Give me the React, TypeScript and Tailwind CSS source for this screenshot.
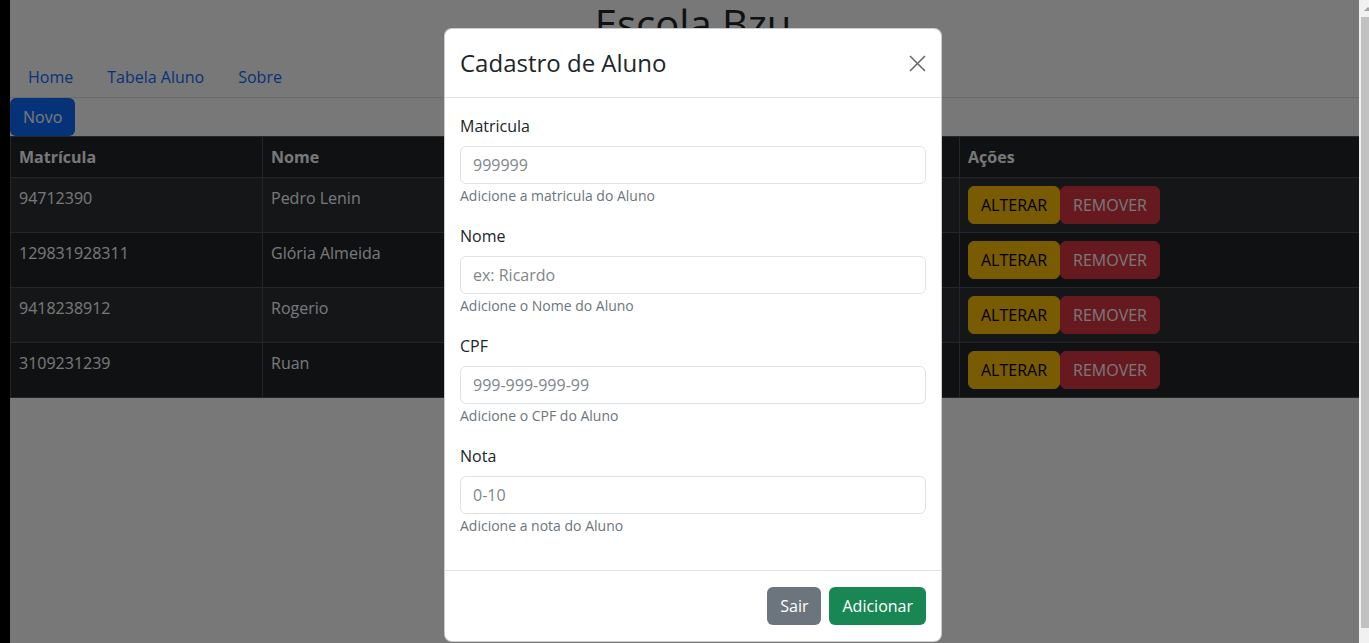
type Aluno = {
    matricula: string;
    nome: string;
    cpf: string;
    nota: string;
};

const alunos: Aluno[] = [
    { matricula: "94712390", nome: "Pedro Lenin", cpf: "123-456-789-00", nota: "8" },
    { matricula: "129831928311", nome: "Glória Almeida", cpf: "987-654-321-00", nota: "9" },
    { matricula: "9418238912", nome: "Rogerio", cpf: "111-222-333-44", nota: "7" },
    { matricula: "3109231239", nome: "Ruan", cpf: "555-666-777-88", nota: "6" },
];

const campos = [
    { label: "Matricula", placeholder: "999999", help: "Adicione a matricula do Aluno" },
    { label: "Nome", placeholder: "ex: Ricardo", help: "Adicione o Nome do Aluno" },
    { label: "CPF", placeholder: "999-999-999-99", help: "Adicione o CPF do Aluno" },
    { label: "Nota", placeholder: "0-10", help: "Adicione a nota do Aluno" },
];

function TabelaAlunos() {
    return (
        <table className="w-[1366px] table-fixed border-collapse bg-[#212529] text-left text-white">
            <colgroup>
                <col className="w-[252px]" />
                <col className="w-[252px]" />
                <col className="w-[250px]" />
                <col className="w-[195px]" />
                <col className="w-[417px]" />
            </colgroup>
            <thead>
                <tr className="h-[41px]">
                    {["Matrícula", "Nome", "CPF", "Nota", "Ações"].map((h) => (
                        <th key={h} className="border border-[#4d5154] px-2 py-2 align-top font-bold leading-6">
                            {h}
                        </th>
                    ))}
                </tr>
            </thead>
            <tbody>
                {alunos.map((a, i) => (
                    <tr key={a.matricula} className={i % 2 === 0 ? "bg-[#2c3034]" : "bg-[#212529]"}>
                        <td className="border border-[#4d5154] p-2 align-top leading-6">{a.matricula}</td>
                        <td className="border border-[#4d5154] p-2 align-top leading-6">{a.nome}</td>
                        <td className="border border-[#4d5154] p-2 align-top leading-6">{a.cpf}</td>
                        <td className="border border-[#4d5154] p-2 align-top leading-6">{a.nota}</td>
                        <td className="border border-[#4d5154] p-2 align-top leading-6">
                            <div className="flex">
                                <button className="h-[38px] rounded-md border border-[#ffc107] bg-[#ffc107] px-3 text-black">
                                    ALTERAR
                                </button>
                                <button className="h-[38px] rounded-md border border-[#dc3545] bg-[#dc3545] px-3 text-white">
                                    REMOVER
                                </button>
                            </div>
                        </td>
                    </tr>
                ))}
            </tbody>
        </table>
    );
}

function ModalCadastro() {
    return (
        <div className="absolute left-[434px] top-[28px] w-[498px] rounded-lg border border-black/20 bg-white text-[#212529]">
            {/* Header */}
            <div className="flex items-center justify-between border-b border-[#dee2e6] px-[15px] py-4">
                <h4 className="text-[24px] leading-9">Cadastro de Aluno</h4>
                <button type="button" title="Close" className="text-[#6a6a6a]">
                    <svg width="17" height="17" viewBox="0 0 17 17" fill="none" stroke="currentColor" strokeWidth="1.6">
                        <path d="M1 1L16 16M16 1L1 16" />
                    </svg>
                </button>
            </div>

            {/* Body */}
            <div className="px-[15px] py-4">
                {campos.map((c) => (
                    <div key={c.label} className="mb-4">
                        <label className="mb-2 block leading-6">{c.label}</label>
                        <input
                            type="text"
                            placeholder={c.placeholder}
                            className="block h-[38px] w-full rounded-md border border-[#dee2e6] px-3 py-1.5 leading-6 placeholder:text-[#80868b] focus:outline-none"
                        />
                        <small className="block h-6 pt-px text-[14px] leading-[22px] text-[#6c757d]">{c.help}</small>
                    </div>
                ))}
            </div>

            {/* Footer */}
            <div className="flex justify-end gap-2 border-t border-[#dee2e6] px-[15px] py-4">
                <button className="h-[38px] rounded-md bg-[#6c757d] px-[13px] text-white">Sair</button>
                <button className="h-[38px] rounded-md bg-[#198754] px-[13px] text-white">Adicionar</button>
            </div>
        </div>
    );
}

export default function App() {
    return (
        <div className="flex h-[643px] w-full overflow-hidden bg-black font-['Open_Sans',sans-serif] text-base">
            <div className="w-[10px] shrink-0 bg-black" />

            <div className="relative flex-1 overflow-hidden bg-white">
                <div className="w-[1366px]">
                    <h1 className="mb-[9px] text-center text-[40px] leading-[48px] text-[#212529]">Escola Bzu</h1>

                    <nav className="flex border-b border-[#dee2e6] pl-px">
                        {["Home", "Tabela Aluno", "Sobre"].map((l) => (
                            <a key={l} className="px-[17px] py-2 leading-6 text-[#0d6efd]">
                                {l}
                            </a>
                        ))}
                    </nav>

                    <button className="h-[38px] rounded-md bg-[#0d6efd] px-[13px] text-white">Novo</button>

                    <TabelaAlunos />
                </div>

                {/* Backdrop */}
                <div className="absolute inset-0 bg-black/[0.53]" />

                <ModalCadastro />
            </div>

            {/* Scrollbar */}
            <div className="relative w-[10px] shrink-0 bg-[#f1f1f1]">
                <div className="absolute left-[5px] top-[7px] h-0 w-0 border-x-[4px] border-b-[4px] border-x-transparent border-b-[#a3a3a3]" />
                <div className="absolute left-[2px] right-0 top-[17px] h-[611px] bg-[#c1c1c1]" />
            </div>
        </div>
    );
}
